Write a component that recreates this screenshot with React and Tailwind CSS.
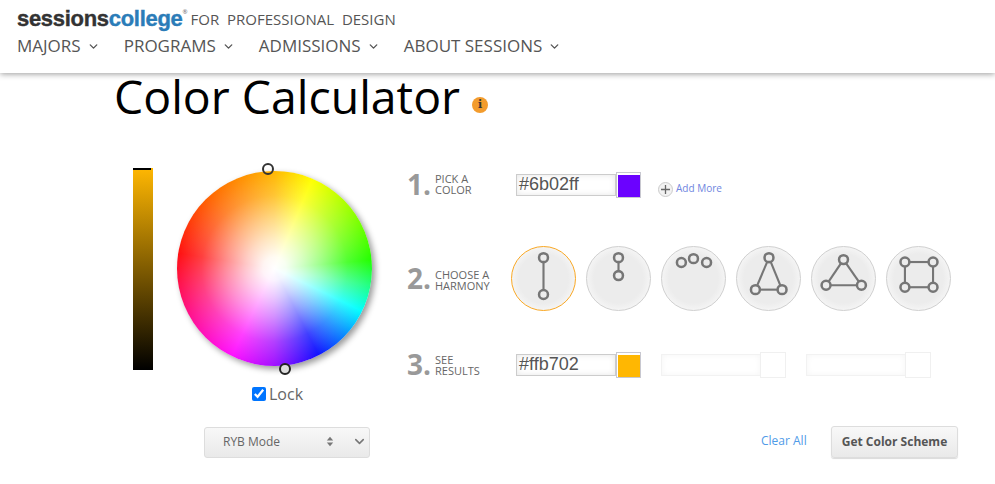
import React from 'react';
import { ChevronDown } from 'lucide-react';

const navItems = ['MAJORS', 'PROGRAMS', 'ADMISSIONS', 'ABOUT SESSIONS'];

const harmonies = [
  { nodes: [[32.5, 11], [32.5, 49]], lines: [[0, 1]], active: true },
  { nodes: [[32.5, 11], [32.5, 29.5]], lines: [[0, 1]] },
  { nodes: [[20, 16], [32.5, 12], [46, 16]], lines: [] },
  { nodes: [[33, 11], [19, 44], [46.5, 44]], lines: [[0, 1], [1, 2], [2, 0]] },
  { nodes: [[32.5, 13], [14.5, 39.5], [51, 39.5]], lines: [[0, 1], [1, 2], [2, 0]] },
  { nodes: [[18.5, 15.5], [47.5, 15.5], [47.5, 41.5], [18.5, 41.5]], lines: [[0, 1], [1, 2], [2, 3], [3, 0]] },
];

function HarmonyButton({ nodes, lines, active }) {
  return (
    <button
      className={`w-[65px] h-[65px] shrink-0 rounded-full border bg-[radial-gradient(circle_closest-side,#ececec_78%,#f4f4f4_100%)] ${
        active ? 'border-[#f9a825]' : 'border-[#d0d0d0]'
      }`}
    >
      <svg viewBox="0 0 65 65" className="w-full h-full">
        {lines.map(([a, b]) => (
          <line
            key={`${a}-${b}`}
            x1={nodes[a][0]}
            y1={nodes[a][1]}
            x2={nodes[b][0]}
            y2={nodes[b][1]}
            stroke="#767676"
            strokeWidth="2.2"
          />
        ))}
        {nodes.map(([x, y]) => (
          <circle key={`${x}-${y}`} cx={x} cy={y} r="4.6" fill="#ececec" stroke="#767676" strokeWidth="2.6" />
        ))}
      </svg>
    </button>
  );
}

function StepLabel({ num, lines, textClass = '' }) {
  return (
    <div className="flex items-center w-[109px] shrink-0">
      <span className="w-[28px] -mt-[3px] text-[28px] leading-none font-bold text-[#999] font-['Open_Sans',sans-serif]">{num}.</span>
      <span className={`text-[11px] leading-[11px] text-[#666] font-['Open_Sans',sans-serif] ${textClass}`}>
        {lines.map((l) => (
          <span key={l} className="block">{l}</span>
        ))}
      </span>
    </div>
  );
}

function ColorField({ value, color }) {
  return (
    <div className="flex items-center">
      <div className="w-[100px] h-[22px] border border-[#ccc] bg-white shadow-[inset_0_0_6px_#e6e6e6] pl-[2px] text-[18px] leading-[19px] text-[#555] font-['Liberation_Sans',sans-serif]">
        {value}
      </div>
      <div className="w-[25px] h-[26px] border border-[#c8c8d0] bg-white pl-[1px] pt-[2px]">
        <div className="w-full h-full" style={{ backgroundColor: color }} />
      </div>
    </div>
  );
}

function EmptyField() {
  return (
    <div className="flex items-center">
      <div className="w-[100px] h-[22px] border border-[#f2f2f2] bg-white shadow-[inset_0_0_6px_#f5f5f5]" />
      <div className="w-[26px] h-[26px] -ml-px border border-[#f0f0f0] bg-white" />
    </div>
  );
}

export default function App() {
  return (
    <div className="w-[995px] h-[484px] overflow-hidden bg-white font-['Open_Sans',sans-serif]">
      {/* Header */}
      <header className="h-[73px] pl-[17px] pt-[8px] bg-white shadow-[0_1px_6px_rgba(0,0,0,0.4)] relative">
        <div className="flex items-center h-[22px]">
          <span className="font-['Liberation_Sans',sans-serif] font-bold text-[22px] tracking-[-0.3px] leading-none text-[#333] [-webkit-text-stroke:0.4px_#333]">sessions</span>
          <span className="font-['Liberation_Sans',sans-serif] font-bold text-[22px] tracking-[-0.3px] leading-none text-[#2b7cb8] [-webkit-text-stroke:0.4px_#2b7cb8]">college</span>
          <span className="self-start text-[6px] leading-none text-[#666] mt-[1px]">®</span>
          <span className="ml-[3px] text-[15px] [word-spacing:4px] text-[#555] whitespace-pre leading-none">FOR PROFESSIONAL DESIGN</span>
        </div>
        <nav className="flex items-center gap-[24px] mt-[3px] h-[26px]">
          {navItems.map((item) => (
            <div key={item} className="flex items-center gap-[6px] text-[17px] text-[#555]">
              {item}
              <ChevronDown className="w-[13px] h-[13px] mt-[1px]" strokeWidth={2.5} />
            </div>
          ))}
        </nav>
      </header>

      {/* Title */}
      <div className="flex items-center pl-[114px] h-[48px]">
        <h1 className="-mt-[2px] text-[46.4px] leading-none text-black font-normal tracking-normal">Color Calculator</h1>
        <div className="ml-[12px] mt-[15px] w-[16px] h-[16px] rounded-full bg-[#f39c2d] flex items-center justify-center text-[11px] font-bold text-[#333] font-['DejaVu_Serif',serif] leading-none">
          i
        </div>
      </div>

      <div className="flex mt-[47px]">
        {/* Left: value bar and wheel */}
        <div className="w-[407px] shrink-0 pl-[133px]">
          <div className="flex">
            <div className="w-[20px] h-[202px] bg-[linear-gradient(#ffb702,#000)] relative">
              <div className="absolute top-0 left-0 w-[18px] h-[2px] bg-black" />
            </div>
            <div className="ml-[24px] mt-[3px] relative w-[195px] h-[195px]">
              <div className="w-full h-full rounded-full shadow-[3px_3px_6px_rgba(0,0,0,0.4)] [background:radial-gradient(circle_closest-side,#fff_0%,rgba(255,255,255,0.95)_12%,rgba(255,255,255,0.76)_30%,rgba(255,255,255,0.52)_50%,rgba(255,255,255,0.2)_75%,rgba(255,255,255,0)_100%),conic-gradient(#ffb702_0deg,#ffff00_23deg,#90ff00_55deg,#22ff00_85deg,#20ff80_100deg,#00ffff_116deg,#0880ff_135deg,#1010ff_153deg,#a010ff_180deg,#ff10ff_206deg,#ff1090_240deg,#ff1010_279deg,#ff6a00_320deg,#ffb702_360deg)]" />
              <div className="absolute top-[-8px] left-[85px] w-[12px] h-[12px] rounded-full border-2 border-[#333]" />
              <div className="absolute top-[192px] left-[102px] w-[12px] h-[12px] rounded-full border-2 border-[#222] bg-[#ddd]" />
            </div>
          </div>
          <div className="flex items-center h-[24px] mt-[12px] pl-[119px]">
            <input type="checkbox" defaultChecked className="w-[14px] h-[14px] m-0" />
            <span className="ml-[3px] text-[16px] text-[#666]">Lock</span>
          </div>
          <div className="ml-[71px] mt-[21px] w-[166px] h-[31px] flex items-center pl-[18px] pr-[2px] pb-[2px] border border-[#ddd] rounded-[3px] bg-[linear-gradient(#f8f8f8,#e9e9e9)] text-[12px] text-[#666]">
            <span className="flex-1">RYB Mode</span>
            <svg viewBox="0 0 10 12" className="w-[8px] h-[11px] mr-[18px]" fill="#777">
              <path d="M5 0l4 4.600H1zM5 12L1 7.400h8z" />
            </svg>
            <ChevronDown className="w-[15px] h-[15px] text-[#777]" strokeWidth={2.5} />
          </div>
        </div>

        {/* Right: steps */}
        <div className="flex-1">
          <div className="flex items-center h-[26px] mt-[4px]">
            <StepLabel num="1" lines={['PICK A', 'COLOR']} textClass="-mt-[2px]" />
            <ColorField value="#6b02ff" color="#6b02ff" />
            <div className="ml-[17px] mt-[9px] w-[15px] h-[15px] rounded-full border border-[#ccc] bg-[#f2f2f2] flex items-center justify-center text-[#555]">
              <svg viewBox="0 0 9 9" className="w-[9px] h-[9px]" stroke="#666" strokeWidth="1.3">
                <path d="M4.500 0v9M0 4.500h9" />
              </svg>
            </div>
            <a className="ml-[3px] mt-[7px] text-[10px] text-[#6f86e0]">Add More</a>
          </div>

          <div className="flex items-center mt-[48px] h-[65px]">
            <div className="w-[104px] mt-[2px]">
              <StepLabel num="2" lines={['CHOOSE A', 'HARMONY']} />
            </div>
            <div className="flex gap-[10px]">
              {harmonies.map((h, i) => (
                <HarmonyButton key={i} {...h} />
              ))}
            </div>
          </div>

          <div className="flex items-center h-[26px] mt-[41px]">
            <StepLabel num="3" lines={['SEE', 'RESULTS']} />
            <ColorField value="#ffb702" color="#ffb702" />
            <div className="flex gap-[20px] ml-[20px]">
              <EmptyField />
              <EmptyField />
            </div>
          </div>

          <div className="flex items-center mt-[48px] pl-[354px]">
            <a className="w-[70px] -mt-[2px] text-[12px] text-[#4f9be8]">Clear All</a>
            <button className="w-[127px] h-[32px] rounded-[3px] border border-[#ddd] bg-[linear-gradient(#f8f8f8,#e9e9e9)] shadow-[0_1px_1px_rgba(0,0,0,0.15)] text-[12px] font-bold text-[#555]">
              Get Color Scheme
            </button>
          </div>
        </div>
      </div>
    </div>
  );
}
